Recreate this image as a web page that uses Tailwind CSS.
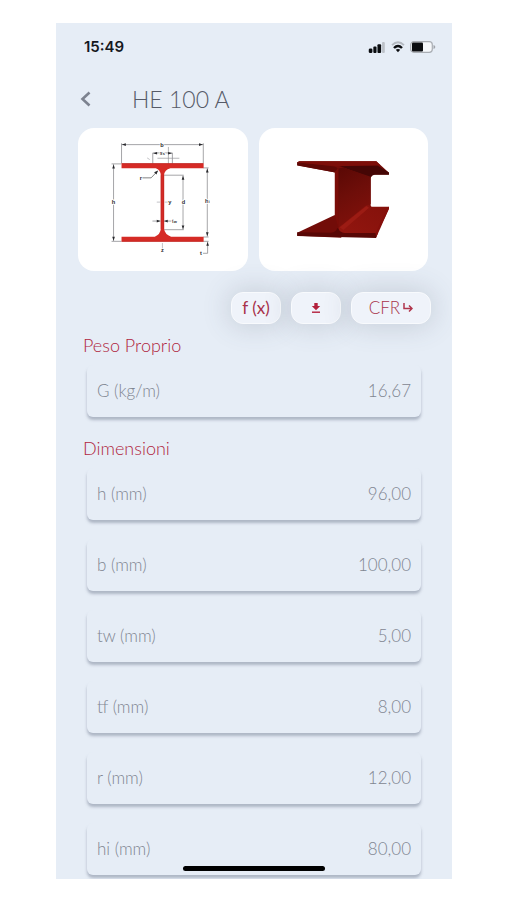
<!DOCTYPE html>
<html lang="it">
<head>
  <meta charset="UTF-8">
  <meta name="viewport" content="width=device-width, initial-scale=1.0">
  <title>HE 100 A</title>
  <script src="https://cdn.jsdelivr.net/npm/@tailwindcss/browser@4"></script>
</head>
<body class="bg-white font-['Lato',sans-serif] font-light">
  <div class="relative ml-14 mr-[55px] mt-[23px] mb-[22px] pb-1 bg-[#e6edf6] overflow-hidden">

    <!-- Status bar -->
    <div class="flex items-center justify-between pl-7 pr-4 pt-3">
      <span class="font-['Inter',sans-serif] text-[15px] leading-6 font-semibold text-[#15181e]">15:49</span>
      <div class="flex items-center gap-[5px]">
        <svg class="w-[18px] h-[11px]" viewBox="0 0 18 12" fill="#0b0d10">
          <rect x="0" y="7" width="4" height="5" rx="1.5"/>
          <rect x="5" y="5" width="3.5" height="7" rx="1"/>
          <rect x="9.5" y="2.5" width="4" height="9.5" rx="1"/>
          <rect x="14.5" y="0" width="3" height="12" rx="1" fill="#bcc1c8"/>
        </svg>
        <svg class="w-[14px] h-3" viewBox="0 0 14 12" fill="none">
          <path d="M1 4.200Q7-1.600 13 4.200" stroke="#b4b9c0" stroke-width="1.8"/>
          <path d="M3 7Q7 3 11 7" stroke="#0b0d10" stroke-width="2.4"/>
          <path d="M4.800 8.800Q7 7 9.200 8.800L7 11.200z" fill="#0b0d10"/>
        </svg>
        <svg class="w-[26px] h-3" viewBox="0 0 26 12">
          <rect x="0.7" y="0.7" width="21.6" height="10.6" rx="3" fill="#f6f8fb" stroke="#a9adb3" stroke-width="1.2"/>
          <rect x="2" y="1.5" width="11" height="9" rx="1" fill="#0b0d10"/>
          <path d="M23.500 4v4q1.800-.6 1.800-2t-1.800-2" fill="#a0a4aa"/>
        </svg>
      </div>
    </div>

    <!-- Header -->
    <header class="flex items-center gap-10 pl-6 pt-6">
      <button type="button" aria-label="Indietro" class="shrink-0">
        <svg class="w-3 h-[18px]" viewBox="0 0 12 18" fill="none" stroke="#7d8390" stroke-width="2.6">
          <path d="M9.500 2.500L2.500 9l7 6.500"/>
        </svg>
      </button>
      <h1 class="text-[23px] leading-8 text-[#565b68]">HE 100 A</h1>
    </header>

    <!-- Profile pictures -->
    <div class="grid grid-cols-2 gap-[11px] pl-[22px] pr-6 pt-[13px]">
      <div class="bg-white rounded-2xl">
        <svg class="block w-full" viewBox="9 18 510 429" role="img" aria-label="Sezione quotata">
          <g stroke="#77777b" stroke-width="2" fill="none">
            <path d="M140 68H386M140 64V124M386 64V124"/>
            <path d="M234 93H293M234 93V126M293 93V126"/>
            <path d="M248 109H314M281 75V138" stroke="#8f8f94"/>
            <path d="M116 127V358M110 126H139M110 359H139"/>
            <path d="M398 139V345M386 138H402M386 346H402M386 359H402M399 360V395H385"/>
            <path d="M268 160H327M268 324H327M325 161V324"/>
            <path d="M203 168H229L248 148" stroke="#444"/>
            <path d="M233 298H257M268 298H290"/>
            <path d="M246 241H256M270 241H279M263 364V380M217 108L225 113" stroke="#a5a5aa"/>
          </g>
          <path fill="#d52b26" d="M140 124H387V139H287Q269 143 268 160V322Q270 338 289 345H387V360H140V345H240Q257 338 258 322V160Q257 143 243 139H140z"/>
          <path fill="none" stroke="#b52520" stroke-width="1.5" d="M140 125H386M140 359H386M259 160V322M267 160V322"/>
          <g fill="#29292d">
            <path d="M141 68l12-4v8zM385 68l-12-4v8zM235 94l12-4v8zM292 94l-12-4v8z"/>
            <path d="M116 128l-4 12h8zM116 357l-4-12h8zM398 140l-4 12h8zM398 344l-4-12h8zM325 162l-4 12h8zM325 323l-4-12h8zM399 361l-4 11h8z"/>
            <path d="M250 146l-5 12-7-7zM257 298l-11-4v8zM268 298l11-4v8z"/>
          </g>
          <g fill="#29292d" font-family="Liberation Sans, sans-serif" font-size="17" font-weight="bold" text-anchor="middle" stroke="#fff" stroke-width="4" paint-order="stroke">
            <text x="262" y="74">b</text>
            <text x="263" y="100">s<tspan font-size="12">s</tspan></text>
            <text x="198" y="174" stroke="none">r</text>
            <text x="116" y="247">h</text>
            <text x="285" y="247" stroke="none">y</text>
            <text x="326" y="247">d</text>
            <text x="398" y="245">h<tspan font-size="12">i</tspan></text>
            <text x="299" y="303">t<tspan font-size="12">w</tspan></text>
            <text x="263" y="391" stroke="none">z</text>
            <text x="379" y="400" stroke="none">t</text>
          </g>
        </svg>
      </div>
      <div class="bg-white rounded-2xl">
        <svg class="block w-full" viewBox="24 18 510 429" role="img" aria-label="Vista 3D del profilo">
          <defs>
            <linearGradient id="web" x1="0" y1="0" x2="0.3" y2="1">
              <stop offset="0" stop-color="#5a0805"/>
              <stop offset="0.5" stop-color="#6e0e09"/>
              <stop offset="1" stop-color="#80110b"/>
            </linearGradient>
            <linearGradient id="flange" x1="0" y1="1" x2="1" y2="0">
              <stop offset="0" stop-color="#93160f"/>
              <stop offset="1" stop-color="#84110b"/>
            </linearGradient>
          </defs>
          <path fill="#740c08" d="M139 121L146 118H377L415 153V158H372Q361 160 360 170V258L253 330V152L139 130z"/>
          <path fill="#450605" d="M262 131H380L415 152V159H372Q363 159 360 167z"/>
          <path fill="#5e0805" d="M139 121L250 134Q266 137 262 155L250 151L139 131z"/>
          <path fill="#7d0e09" d="M145 118H377L389 130L258 133L139 122z"/>
          <path fill="url(#web)" d="M262 140L278 137L360 165V246L262 322z"/>
          <path fill="#7a0d08" d="M252 150L263 138V322L252 320z"/>
          <path fill="#720c08" d="M139 333L252 280L263 320L272 348L139 342z"/>
          <path fill="url(#flange)" d="M262 320L344 253Q355 245 363 255H415V261L376 343L264 336z"/>
          <path fill="#9c1c14" d="M267 317L347 253L355 258L278 325z"/>
          <path fill="#580705" d="M139 332L240 333Q257 332 259 320L263 320Q266 333 282 334H382L376 349L139 343z"/>
          <path fill="#860f0b" d="M383 333L415 261V255L409 257L375 335L376 348z"/>
        </svg>
      </div>
    </div>

    <!-- Actions -->
    <div class="flex justify-end gap-[10px] pr-[21px] pt-[21px] text-[17px] text-[#a8324a]">
      <button type="button" class="flex items-center justify-center w-[50px] h-8 rounded-xl bg-[#eff3fa] border border-[#f8fafd] shadow-[0_0_28px_2px_rgba(70,80,100,0.2)] font-normal">f (x)</button>
      <button type="button" aria-label="Scarica" class="flex items-center justify-center w-[50px] h-8 rounded-xl bg-[#eff3fa] border border-[#f8fafd] shadow-[0_0_28px_2px_rgba(70,80,100,0.2)]">
        <svg class="w-[10px] h-3" viewBox="0 0 10 12" fill="#b3203c">
          <path d="M3.300 1H6.700V4H9.200L5 8.300L.8 4H3.300z"/>
          <rect x="1" y="9.5" width="8" height="1.4"/>
        </svg>
      </button>
      <button type="button" class="flex items-center justify-center gap-[3px] w-20 h-8 rounded-xl bg-[#eff3fa] border border-[#f8fafd] shadow-[0_0_28px_2px_rgba(70,80,100,0.2)]">
        CFR
        <svg class="w-[10px] h-[10px]" viewBox="0 0 10 10" fill="none" stroke="#b0354c" stroke-width="1.5">
          <path d="M1 0V5.500H8.500M6 2.500L9 5.500L6 8.500"/>
        </svg>
      </button>
    </div>

    <!-- Properties -->
    <main class="relative px-[31px]">
      <h2 class="-ml-1 pt-[9px] pb-2 text-lg leading-6 text-[#b02640]">Peso Proprio</h2>
      <dl class="text-[17px] text-[#7f8591]">
        <div class="flex items-center justify-between h-[52px] px-[10px] rounded-md bg-[#e6edf6] shadow-[0_3px_3px_rgba(70,80,105,0.35)]">
          <dt>G (kg/m)</dt>
          <dd>16,67</dd>
        </div>
      </dl>

      <h2 class="-ml-1 pt-[19px] pb-2 text-lg leading-6 text-[#b02640]">Dimensioni</h2>
      <dl class="flex flex-col gap-[19px] text-[17px] text-[#7f8591]">
        <div class="flex items-center justify-between h-[52px] px-[10px] rounded-md bg-[#e6edf6] shadow-[0_3px_3px_rgba(70,80,105,0.35)]">
          <dt>h (mm)</dt>
          <dd>96,00</dd>
        </div>
        <div class="flex items-center justify-between h-[52px] px-[10px] rounded-md bg-[#e6edf6] shadow-[0_3px_3px_rgba(70,80,105,0.35)]">
          <dt>b (mm)</dt>
          <dd>100,00</dd>
        </div>
        <div class="flex items-center justify-between h-[52px] px-[10px] rounded-md bg-[#e6edf6] shadow-[0_3px_3px_rgba(70,80,105,0.35)]">
          <dt>tw (mm)</dt>
          <dd>5,00</dd>
        </div>
        <div class="flex items-center justify-between h-[52px] px-[10px] rounded-md bg-[#e6edf6] shadow-[0_3px_3px_rgba(70,80,105,0.35)]">
          <dt>tf (mm)</dt>
          <dd>8,00</dd>
        </div>
        <div class="flex items-center justify-between h-[52px] px-[10px] rounded-md bg-[#e6edf6] shadow-[0_3px_3px_rgba(70,80,105,0.35)]">
          <dt>r (mm)</dt>
          <dd>12,00</dd>
        </div>
        <div class="flex items-center justify-between h-[52px] px-[10px] rounded-md bg-[#e6edf6] shadow-[0_3px_3px_rgba(70,80,105,0.35)]">
          <dt>hi (mm)</dt>
          <dd>80,00</dd>
        </div>
      </dl>
    </main>

    <!-- Home indicator -->
    <div class="absolute bottom-2 left-1/2 -translate-x-1/2 w-[142px] h-[5px] rounded-full bg-black"></div>
  </div>
</body>
</html>
